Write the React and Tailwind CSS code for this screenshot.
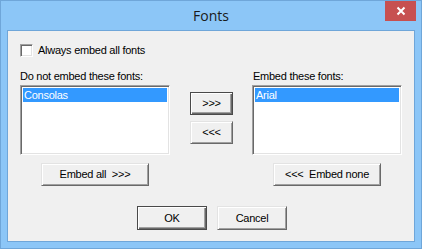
import React, { useState } from 'react';

const raised =
  "bg-[#f0f0f0] border border-t-[#e3e3e3] border-l-[#e3e3e3] border-b-[#696969] border-r-[#696969] shadow-[inset_1px_1px_#ffffff,inset_-1px_-1px_#a0a0a0]";
const raisedDefault =
  "bg-[#f0f0f0] border border-[#4a4a4a] shadow-[inset_1px_1px_#ffffff,inset_-1px_-1px_#696969,inset_-2px_-2px_#a0a0a0]";
const sunken =
  "bg-white border border-t-[#a0a0a0] border-l-[#a0a0a0] border-b-[#ffffff] border-r-[#ffffff] shadow-[inset_1px_1px_#696969,inset_-1px_-1px_#e3e3e3]";

function Button({ children, className, isDefault }) {
  return (
    <button
      type="button"
      className={`${isDefault ? raisedDefault : raised} flex items-center justify-center text-[11px] leading-none text-black ${className}`}
    >
      {children}
    </button>
  );
}

function ListBox({ items, selected }) {
  return (
    <div className={`${sunken} w-[150px] h-[70px] p-[2px]`}>
      {items.map((item) => (
        <div
          key={item}
          className={`h-[14px] pl-[1px] text-[11px] leading-[14px] ${item === selected ? "bg-[#3399ff] text-white" : "text-black"}`}
        >
          {item}
        </div>
      ))}
    </div>
  );
}

export default function App() {
  const [always, setAlways] = useState(false);

  return (
    <div
      className="w-[422px] h-[249px] bg-[#8cc6f7] border border-[#6fa6d9] flex flex-col tracking-[-0.25px]"
      style={{ fontFamily: '"Liberation Sans", Arial, sans-serif' }}
    >
      {/* title bar */}
      <div className="relative h-[29px] flex items-center justify-center">
        <span
          className="text-[14px] text-[#1a1a1a] -mt-[1px] tracking-normal"
          style={{ fontFamily: '"Open Sans", "Noto Sans", sans-serif' }}
        >
          Fonts
        </span>
        <div className="absolute top-0 right-[5px] w-[31px] h-[20px] bg-[#c75050] flex items-center justify-center">
          <svg width="10" height="10" viewBox="0 0 10 10">
            <path d="M1.5 1.5 L8.5 8.5 M8.5 1.5 L1.5 8.5" stroke="#ffffff" strokeWidth="2" />
          </svg>
        </div>
      </div>

      {/* client area */}
      <div className="mx-[6px] h-[212px] border border-[#6fa6d9] bg-[#f0f0f0] px-[12px] pt-[13px]">
        <label className="flex items-center gap-[5px] h-[13px]" onClick={() => setAlways(!always)}>
          <span className={`${sunken} w-[13px] h-[13px] flex items-center justify-center text-[10px]`}>
            {always ? "✓" : ""}
          </span>
          <span className="text-[11px] text-black leading-[13px]">Always embed all fonts</span>
        </label>

        <div className="flex gap-[20px] mt-[13px]">
          <div className="flex flex-col items-center w-[150px]">
            <div className="self-start text-[11px] leading-[13px] text-black">Do not embed these fonts:</div>
            <div className="mt-[2px]">
              <ListBox items={["Consolas"]} selected="Consolas" />
            </div>
            <Button className="mt-[8px] w-[108px] h-[23px]">Embed all&nbsp;&nbsp;&gt;&gt;&gt;</Button>
          </div>

          <div className="flex flex-col w-[42px] pt-[22px] gap-[6px]">
            <Button isDefault className="w-[43px] h-[23px]">&gt;&gt;&gt;</Button>
            <Button className="w-[43px] h-[23px]">&lt;&lt;&lt;</Button>
          </div>

          <div className="flex flex-col items-center w-[150px]">
            <div className="self-start text-[11px] leading-[13px] text-black pl-[1px]">Embed these fonts:</div>
            <div className="mt-[2px]">
              <ListBox items={["Arial"]} selected="Arial" />
            </div>
            <Button className="mt-[8px] w-[108px] h-[23px]">&lt;&lt;&lt;&nbsp;&nbsp;Embed none</Button>
          </div>
        </div>

        <div className="flex justify-center gap-[10px] mt-[20px] pl-[2px]">
          <Button isDefault className="w-[70px] h-[24px]">OK</Button>
          <Button className="w-[70px] h-[24px]">Cancel</Button>
        </div>
      </div>
    </div>
  );
}
